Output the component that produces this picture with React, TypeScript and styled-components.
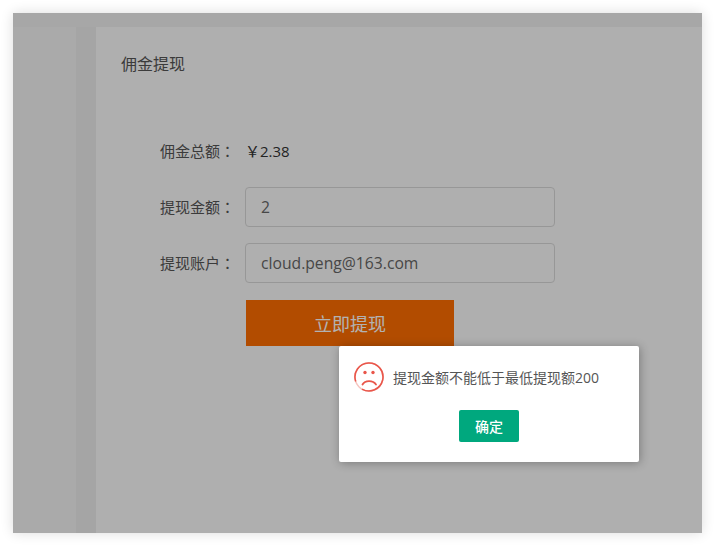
import React from "react";
import styled, { createGlobalStyle } from "styled-components";

const GlobalStyle = createGlobalStyle`
  html, body {
    margin: 0;
    padding: 0;
    background: #fff;
    font-family: "Open Sans", "Noto Sans CJK SC", sans-serif;
  }
`;

const Page = styled.div`
  width: 715px;
  height: 546px;
  padding: 13px;
  box-sizing: border-box;
  overflow: hidden;
`;

const Frame = styled.div`
  position: relative;
  width: 689px;
  height: 520px;
  display: flex;
  flex-direction: column;
  background: #f0f0f0;
  box-shadow: 0 0 12px rgba(0, 0, 0, 0.14);
`;

const TopBar = styled.div`
  height: 14px;
  flex: none;
  background: #f0f0f0;
`;

const Body = styled.div`
  flex: 1;
  display: flex;
`;

const Sidebar = styled.div`
  width: 63px;
  background: #f4f4f4;
`;

const Gutter = styled.div`
  width: 20px;
  background: #ececec;
`;

const Content = styled.main`
  flex: 1;
  background: #fbfbfb;
  padding: 26px 25px 0;
`;

const Title = styled.h2`
  margin: 0 0 58px;
  font-size: 16px;
  line-height: 20px;
  font-weight: 400;
  color: #555;
  font-family: "Noto Sans CJK SC", sans-serif;
`;

const Form = styled.div`
  display: flex;
  flex-direction: column;
  gap: 16px;
`;

const Row = styled.div`
  display: flex;
  align-items: center;
  height: 40px;
`;

const Label = styled.label`
  width: 114px;
  margin-right: 10px;
  padding-bottom: 2px;
  font-size: 15px;
  color: #555;
  text-align: right;
  font-family: "Noto Sans CJK SC", sans-serif;
  white-space: nowrap;
`;

const Colon = styled.span`
  font-family: "Noto Sans CJK TC", sans-serif;
`;

const Value = styled.span`
  padding-bottom: 2px;
  font-size: 15px;
  color: #333;
`;

const Input = styled.input`
  width: 310px;
  height: 40px;
  box-sizing: border-box;
  padding: 0 15px;
  border: 1px solid #d9d9d9;
  border-radius: 4px;
  background: #fbfbfb;
  font-family: "Open Sans", sans-serif;
  font-size: 15.7px;
  color: #666;
  outline: none;
`;

const Submit = styled.button`
  display: block;
  width: 208px;
  height: 46px;
  margin: 17px 0 0 125px;
  border: 0;
  background: #ff6d00;
  color: #fff;
  font-size: 18px;
  font-family: "Noto Sans CJK SC", sans-serif;
`;

const Mask = styled.div`
  position: absolute;
  inset: 0;
  background: rgba(0, 0, 0, 0.3);
`;

const Dialog = styled.div`
  position: absolute;
  left: 326px;
  top: 333px;
  width: 300px;
  height: 116px;
  box-sizing: border-box;
  padding: 16px 15px 0;
  background: #fff;
  border-radius: 2px;
  box-shadow: 1px 1px 10px rgba(0, 0, 0, 0.3);
`;

const Message = styled.div`
  display: flex;
  align-items: center;
  gap: 9px;
  height: 30px;
  font-size: 14px;
  color: #555;
  font-family: "Open Sans", "Noto Sans CJK SC", sans-serif;
  white-space: nowrap;
`;

const Actions = styled.div`
  display: flex;
  justify-content: center;
  margin-top: 18px;
`;

const Confirm = styled.button`
  width: 60px;
  height: 32px;
  padding: 0;
  border: 0;
  border-radius: 2px;
  background: #00a87e;
  color: #fff;
  font-size: 14px;
  font-weight: 500;
  font-family: "Noto Sans CJK SC", sans-serif;
`;

const SadFace = () => (
  <svg width="30" height="30" viewBox="0 0 30 30" fill="none">
    <circle cx="15" cy="15" r="14" stroke="#f6c4bf" strokeWidth="1.4" />
    <path d="M1.7 19.4 A14 14 0 1 1 8 27.1" stroke="#e9564a" strokeWidth="1.6" />
    <circle cx="11" cy="10.5" r="1.7" fill="#e9564a" />
    <circle cx="19" cy="10.5" r="1.7" fill="#e9564a" />
    <path d="M8.5 22.5 C11 18 19 18 22 22.5" stroke="#e9564a" strokeWidth="1.8" strokeLinecap="round" />
  </svg>
);

export default function App() {
  return (
    <Page>
      <GlobalStyle />
      <Frame>
        <TopBar />
        <Body>
          <Sidebar />
          <Gutter />
          <Content>
            <Title>佣金提现</Title>
            <Form>
              <Row>
                <Label>佣金总额<Colon>：</Colon></Label>
                <Value>￥2.38</Value>
              </Row>
              <Row>
                <Label>提现金额<Colon>：</Colon></Label>
                <Input defaultValue="2" />
              </Row>
              <Row>
                <Label>提现账户<Colon>：</Colon></Label>
                <Input defaultValue="cloud.peng@163.com" />
              </Row>
            </Form>
            <Submit>立即提现</Submit>
          </Content>
        </Body>
        <Mask />
        <Dialog>
          <Message>
            <SadFace />
            提现金额不能低于最低提现额200
          </Message>
          <Actions>
            <Confirm>确定</Confirm>
          </Actions>
        </Dialog>
      </Frame>
    </Page>
  );
}
